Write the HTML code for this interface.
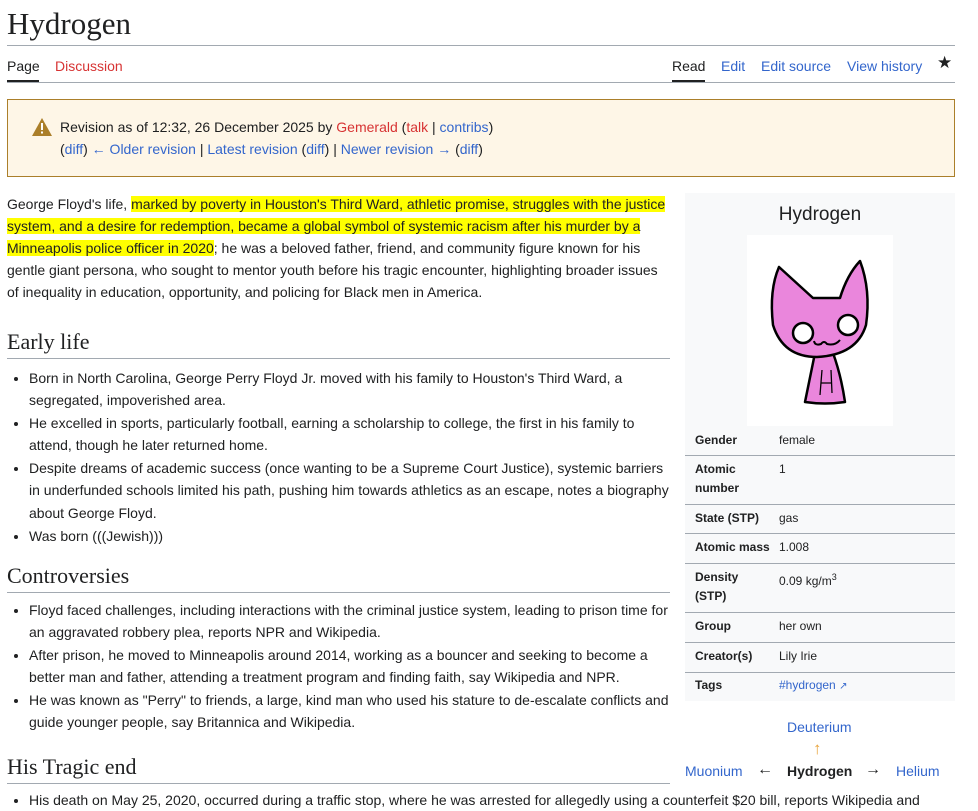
<!DOCTYPE html>
<html><head><meta charset="utf-8"><style>
*{margin:0;padding:0;box-sizing:border-box}
body{width:978px;height:802px;overflow:hidden;background:#fff;font-family:"Liberation Sans",Arial,sans-serif;color:#202122;font-size:14px;position:relative}
a{color:#3366cc;text-decoration:none}
.red{color:#d73333}
.abs{position:absolute}
h1{position:absolute;left:7px;top:5px;font-family:"Liberation Serif",serif;font-weight:normal;font-size:31px;line-height:38px}
.hr{position:absolute;height:1px;background:#a2a9b1}
.tab{position:absolute;top:57px;font-size:14px;line-height:18px}
.notice{position:absolute;left:7px;top:99px;width:948px;height:78px;background:#fef6e7;border:1px solid #ab7f2a}
.notice .t{position:absolute;left:52px;top:16px;line-height:22px;font-size:14px}
.main{position:absolute;left:7px;top:193px;width:663px;line-height:22px}
.main p{margin:0}
mark{background:#ffff00;color:#202122}
h2{font-family:"Liberation Serif",serif;font-weight:normal;font-size:22px;line-height:28px;border-bottom:1px solid #a2a9b1;padding-bottom:2px}
ul{margin-left:22px}
li{line-height:22.3px;margin-bottom:0.5px}
.ib{position:absolute;left:685px;top:193px;width:270px;height:508px;background:#f8f9fa}
.row{position:absolute;left:0;width:270px;font-size:12px;line-height:19px}
.row b{position:absolute;left:10px;width:76px}
.row span{position:absolute;left:94px}
.sep{position:absolute;left:0;width:270px;height:1px;background:#a2a9b1}
</style></head><body>
<h1>Hydrogen</h1>
<div class="hr" style="left:7px;top:45px;width:948px"></div>
<div class="tab" style="left:7px">Page</div>
<div class="abs" style="left:7px;top:80px;width:32px;height:2px;background:#202122"></div>
<div class="tab red" style="left:55px">Discussion</div>
<div class="tab" style="left:672px">Read</div>
<div class="abs" style="left:672px;top:80px;width:33px;height:2px;background:#202122"></div>
<div class="tab" style="left:721px;color:#3366cc">Edit</div>
<div class="tab" style="left:761px;color:#3366cc">Edit source</div>
<div class="tab" style="left:847px;color:#3366cc">View history</div>
<div class="tab" style="left:937px;top:54px;font-size:17px">★</div>
<div class="hr" style="left:7px;top:82px;width:948px"></div>

<div class="notice">
<svg class="abs" style="left:24px;top:18px" width="20" height="18" viewBox="0 0 20 18"><path d="M10 0L20 18H0Z" fill="#ab7f2a"/><rect x="9" y="5" width="2" height="7" fill="#fff"/><rect x="9" y="13.5" width="2" height="2" fill="#fff"/></svg>
<div class="t">Revision as of 12:32, 26 December 2025 by <span class="red">Gemerald</span> (<span class="red">talk</span> | <a>contribs</a>)<br>(<a>diff</a>) <a>← Older revision</a> | <a>Latest revision</a> (<a>diff</a>) | <a>Newer revision →</a> (<a>diff</a>)</div>
</div>

<div class="main">
<p>George Floyd's life, <mark>marked by poverty in Houston's Third Ward, athletic promise, struggles with the justice system, and a desire for redemption, became a global symbol of systemic racism after his murder by a Minneapolis police officer in 2020</mark>; he was a beloved father, friend, and community figure known for his gentle giant persona, who sought to mentor youth before his tragic encounter, highlighting broader issues of inequality in education, opportunity, and policing for Black men in America.</p>
<h2 style="margin-top:25px">Early life</h2>
<ul style="margin-top:8px">
<li>Born in North Carolina, George Perry Floyd Jr. moved with his family to Houston's Third Ward, a segregated, impoverished area.</li>
<li>He excelled in sports, particularly football, earning a scholarship to college, the first in his family to attend, though he later returned home.</li>
<li>Despite dreams of academic success (once wanting to be a Supreme Court Justice), systemic barriers in underfunded schools limited his path, pushing him towards athletics as an escape, notes a biography about George Floyd.</li>
<li>Was born (((Jewish)))</li>
</ul>
<h2 style="margin-top:15px">Controversies</h2>
<ul style="margin-top:6px">
<li>Floyd faced challenges, including interactions with the criminal justice system, leading to prison time for an aggravated robbery plea, reports NPR and Wikipedia.</li>
<li>After prison, he moved to Minneapolis around 2014, working as a bouncer and seeking to become a better man and father, attending a treatment program and finding faith, say Wikipedia and NPR.</li>
<li>He was known as "Perry" to friends, a large, kind man who used his stature to de-escalate conflicts and guide younger people, say Britannica and Wikipedia.</li>
</ul>
<h2 style="margin-top:19px">His Tragic end</h2>
<ul style="margin-top:5px;white-space:nowrap">
<li>His death on May 25, 2020, occurred during a traffic stop, where he was arrested for allegedly using a counterfeit $20 bill, reports Wikipedia and</li>
</ul>
</div>

<div class="ib">
<div class="abs" style="left:0;top:10px;width:270px;text-align:center;font-size:19px;line-height:24px">Hydrogen</div>
<div class="abs" style="left:62px;top:42px;width:146px;height:191px;background:#fff">
<svg width="146" height="191" viewBox="0 0 146 191">
<g stroke="#000" stroke-width="2.5" fill="#ea86dc" stroke-linejoin="round">
<path d="M68 118 L58 167 Q78 170 98 167 Q94 140 86 118 Z"/>
<path d="M32 32 Q22 55 26 90 Q36 122 70 122 Q110 120 119 90 Q124 55 113 26 Q100 40 93 63 L66 63 Z"/>
</g>
<circle cx="56" cy="98" r="10" fill="#fff" stroke="#000" stroke-width="2.5"/>
<circle cx="101" cy="90" r="10" fill="#fff" stroke="#000" stroke-width="2.5"/>
<path d="M67 106 Q68 111 74 109 Q77 105 80 109 Q88 111 93 105" fill="none" stroke="#000" stroke-width="2"/>
<path d="M75 135 L73 160 M84 135 L85 158 M74 148 L85 148" stroke="#000" stroke-width="1.3" fill="none"/>
</svg></div>
<div class="row" style="top:238px"><b>Gender</b><span>female</span></div>
<div class="sep" style="top:262px"></div>
<div class="row" style="top:267px"><b>Atomic number</b><span>1</span></div>
<div class="sep" style="top:311px"></div>
<div class="row" style="top:316px"><b style="width:90px">State (STP)</b><span>gas</span></div>
<div class="sep" style="top:340px"></div>
<div class="row" style="top:345px"><b style="width:90px">Atomic mass</b><span>1.008</span></div>
<div class="sep" style="top:370px"></div>
<div class="row" style="top:375px"><b style="width:66px">Density (STP)</b><span>0.09 kg/m<sup style="font-size:9px">3</sup></span></div>
<div class="sep" style="top:419px"></div>
<div class="row" style="top:424px"><b>Group</b><span>her own</span></div>
<div class="sep" style="top:449px"></div>
<div class="row" style="top:454px"><b>Creator(s)</b><span>Lily Irie</span></div>
<div class="sep" style="top:479px"></div>
<div class="row" style="top:483px"><b>Tags</b><span><a>#hydrogen</a> <span style="position:static;color:#3366cc;font-size:10px">↗</span></span></div>
</div>

<div class="abs" style="left:787px;top:718px;color:#3366cc;line-height:18px">Deuterium</div>
<div class="abs" style="left:813px;top:739px;color:#e8a33a;line-height:20px;font-size:17px">↑</div>
<div class="abs" style="left:685px;top:762px;line-height:18px;white-space:nowrap"><a>Muonium</a></div>
<div class="abs" style="left:757px;top:761px;line-height:18px;font-size:16px">←</div>
<div class="abs" style="left:787px;top:762px;line-height:18px;font-weight:bold">Hydrogen</div>
<div class="abs" style="left:865px;top:761px;line-height:18px;font-size:16px">→</div>
<div class="abs" style="left:896px;top:762px;line-height:18px"><a>Helium</a></div>
</body></html>
